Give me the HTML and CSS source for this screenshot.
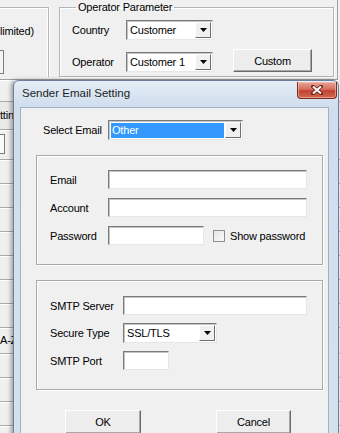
FILE: index.html
```html
<!DOCTYPE html>
<html>
<head>
    <title>Sender Email Setting</title>
    <link rel="stylesheet" href="styles.css">
</head>
<body>
<div class="app">
    <div class="top">
        <div class="group-limit">
            <div class="limit-text">limited)</div>
            <div class="edge-box"></div>
        </div>
        <fieldset class="group-operator">
            <legend>Operator Parameter</legend>
            <div class="op-body">
                <div class="op-rows">
                    <div class="op-row">
                        <span class="op-label">Country</span>
                        <div class="combo combo-op">
                            <span class="combo-text">Customer</span>
                            <span class="combo-btn"><svg width="7" height="4" viewBox="0 0 7 4"><path d="M0 0h7L3.5 4z" fill="#000"/></svg></span>
                        </div>
                    </div>
                    <div class="op-row">
                        <span class="op-label">Operator</span>
                        <div class="combo combo-op">
                            <span class="combo-text">Customer 1</span>
                            <span class="combo-btn"><svg width="7" height="4" viewBox="0 0 7 4"><path d="M0 0h7L3.5 4z" fill="#000"/></svg></span>
                        </div>
                    </div>
                </div>
                <div class="btn btn-custom">Custom</div>
            </div>
        </fieldset>
    </div>

    <div class="list">
        <div class="list-row row-head"></div>
        <div class="list-row row-tab">tting</div>
        <div class="list-row row-box"><div class="mini-box"></div></div>
        <div class="list-row"></div>
        <div class="list-row"></div>
        <div class="list-row"></div>
        <div class="list-row"></div>
        <div class="list-row"></div>
        <div class="list-row"></div>
        <div class="list-row"></div>
        <div class="list-row row-text">A-Z</div>
        <div class="list-row"></div>
        <div class="list-row"></div>
        <div class="list-row"></div>
    </div>

    <div class="dialog">
        <div class="titlebar">
            <span class="title">Sender Email Setting</span>
            <span class="close-btn">
                <svg width="12" height="10" viewBox="0 0 12 10">
                    <path d="M2 1.5l8 7M10 1.5l-8 7" stroke="#6a2119" stroke-width="3.6" stroke-linecap="square"/>
                    <path d="M2 1.5l8 7M10 1.5l-8 7" stroke="#fff" stroke-width="2"/>
                </svg>
            </span>
        </div>
        <div class="client">
            <div class="select-row">
                <span class="select-label">Select Email</span>
                <div class="combo combo-email">
                    <span class="combo-text selected">Other</span>
                    <span class="combo-btn"><svg width="7" height="4" viewBox="0 0 7 4"><path d="M0 0h7L3.5 4z" fill="#000"/></svg></span>
                </div>
            </div>

            <div class="box box-account">
                <div class="field">
                    <span class="field-label">Email</span>
                    <div class="input input-wide"></div>
                </div>
                <div class="field">
                    <span class="field-label">Account</span>
                    <div class="input input-wide"></div>
                </div>
                <div class="field">
                    <span class="field-label">Password</span>
                    <div class="input input-pass"></div>
                    <span class="check"></span>
                    <span class="check-label">Show password</span>
                </div>
            </div>

            <div class="box box-smtp">
                <div class="field">
                    <span class="field-label smtp-label">SMTP Server</span>
                    <div class="input input-server"></div>
                </div>
                <div class="field">
                    <span class="field-label smtp-label">Secure Type</span>
                    <div class="combo combo-secure">
                        <span class="combo-text">SSL/TLS</span>
                        <span class="combo-btn"><svg width="7" height="4" viewBox="0 0 7 4"><path d="M0 0h7L3.5 4z" fill="#000"/></svg></span>
                    </div>
                </div>
                <div class="field">
                    <span class="field-label smtp-label">SMTP Port</span>
                    <div class="input input-port"></div>
                </div>
            </div>

            <div class="buttons">
                <div class="btn btn-ok">OK</div>
                <div class="btn btn-cancel">Cancel</div>
            </div>
        </div>
    </div>
</div>
</body>
</html>
```

FILE: styles.css
```css
body {
    margin: 0;
    background: #f0f0f0;
    font-family: "Liberation Sans", Arial, sans-serif;
    font-size: 11px;
    letter-spacing: -0.2px;
    color: #000;
}

.app {
    position: relative;
    width: 340px;
    height: 433px;
    overflow: hidden;
}

/* background window */

.top {
    display: flex;
    box-sizing: border-box;
    width: 338px;
    height: 80px;
    padding-top: 1px;
    border-bottom: 1px solid #a0a0a0;
    border-right: 1px solid #a0a0a0;
    box-shadow: 0 1px 0 #fff;
}

.group-limit {
    box-sizing: border-box;
    width: 49px;
    height: 70px;
    margin-top: 6px;
    border-top: 1px solid #b4b4b4;
    border-right: 1px solid #b4b4b4;
    box-shadow: inset -1px 1px 0 #fff, 1px 0 0 #fff;
}

.limit-text {
    padding: 17px 0 0 0;
    line-height: 13px;
    white-space: nowrap;
}

.edge-box {
    width: 3px;
    height: 22px;
    margin-top: 12px;
    border: 1px solid #7c7c7c;
    border-left: none;
    background: #f4f4f4;
}

.group-operator {
    box-sizing: border-box;
    width: 275px;
    height: 76px;
    margin: 0 0 0 10px;
    padding: 0 0 0 12px;
    border: 1px solid #b4b4b4;
    box-shadow: inset 1px 1px 0 #fff, 1px 1px 0 #fff;
}

.group-operator legend {
    margin-left: 4px;
    padding: 0 2px;
    line-height: 13px;
}

.op-body {
    display: flex;
    padding-top: 6px;
}

.op-rows {
    display: flex;
    flex-direction: column;
    gap: 12px;
}

.op-row {
    display: flex;
    align-items: center;
}

.op-label {
    width: 54px;
}

.btn-custom {
    align-self: flex-end;
    width: 79px;
    height: 23px;
    margin-left: 20px;
}

.list {
    display: flex;
    flex-direction: column;
}

.list-row {
    box-sizing: border-box;
    height: 24px;
    border-bottom: 1px solid #a9a9a9;
    box-shadow: 0 1px 0 #fff;
    line-height: 22px;
    white-space: nowrap;
}

.row-head {
    height: 22px;
}

.row-tab {
    height: 28px;
    background: #e9e9e9;
    line-height: 26px;
}

.row-box {
    height: 30px;
    padding-top: 4px;
}

.mini-box {
    width: 4px;
    height: 18px;
    border: 1px solid #7c7c7c;
    border-left: none;
    background: #fafafa;
}

.row-text {
    height: 26px;
    line-height: 24px;
}

/* dialog window */

.dialog {
    position: absolute;
    left: 13px;
    top: 80px;
    display: flex;
    flex-direction: column;
    box-sizing: border-box;
    width: 326px;
    height: 370px;
    padding: 0 9px 0 6px;
    border: 1px solid #6d7f96;
    border-radius: 6px 6px 0 0;
    background: linear-gradient(180deg, #e4edf7 0, #cfdded 26px, #d6e1ee 100%);
    box-shadow: -2px 0 4px rgba(0, 0, 0, 0.35);
}

.titlebar {
    display: flex;
    align-items: flex-start;
    height: 26px;
    flex-shrink: 0;
}

.title {
    padding-left: 2px;
    line-height: 24px;
    font-size: 11.5px;
    letter-spacing: 0;
    color: #1e1e1e;
}

.close-btn {
    display: flex;
    align-items: center;
    justify-content: center;
    box-sizing: border-box;
    width: 40px;
    height: 17px;
    margin: 1px -8px 0 auto;
    border: 1px solid #7a2a20;
    border-top: none;
    border-radius: 0 0 4px 4px;
    background: linear-gradient(180deg, #e8a597 0, #d46f5f 45%, #c2422f 55%, #cf6a50 100%);
    box-shadow: inset 0 0 0 1px rgba(255, 210, 200, 0.5);
}

.client {
    flex: 1;
    border: 1px solid #9fb1c6;
    background: #f0f0f0;
}

.select-row {
    display: flex;
    align-items: center;
    margin-top: 12px;
    padding-left: 22px;
}

.select-label {
    width: 65px;
}

.box {
    box-sizing: border-box;
    width: 287px;
    height: 110px;
    margin: 15px 0 0 15px;
    border: 1px solid #a9a9a9;
    box-shadow: inset 1px 1px 0 #fff, 1px 1px 0 #fff;
    display: flex;
    flex-direction: column;
}

.box-account {
    padding: 14px 0 0 13px;
    gap: 9px;
}

.box-smtp {
    padding: 15px 0 0 13px;
    gap: 8px;
}

.field {
    display: flex;
    align-items: center;
}

.field-label {
    width: 58px;
}

.smtp-label {
    width: 73px;
}

/* controls */

.input {
    box-sizing: border-box;
    height: 19px;
    background: #fff;
    border: 1px solid;
    border-color: #7a7a7a #e6e6e6 #e6e6e6 #7a7a7a;
    box-shadow: inset 1px 1px 0 #c4c4c4;
}

.input-wide {
    width: 199px;
}

.input-pass {
    width: 96px;
}

.input-server {
    width: 184px;
}

.input-port {
    width: 46px;
}

.check {
    box-sizing: border-box;
    width: 12px;
    height: 12px;
    margin-left: 9px;
    border: 1px solid #8e8f8f;
    background: linear-gradient(135deg, #e4e4e4, #fbfbfb);
}

.check-label {
    margin-left: 5px;
}

.combo {
    display: flex;
    box-sizing: border-box;
    height: 20px;
    padding: 1px;
    background: #fff;
    border: 1px solid;
    border-color: #7a7a7a #e6e6e6 #e6e6e6 #7a7a7a;
    box-shadow: inset 1px 1px 0 #c4c4c4;
}

.combo-op {
    width: 87px;
}

.combo-email {
    width: 135px;
}

.combo-secure {
    width: 94px;
}

.combo-text {
    flex: 1;
    padding-left: 2px;
    line-height: 16px;
    white-space: nowrap;
    overflow: hidden;
}

.combo-text.selected {
    margin: 1px 1px 0 1px;
    padding-left: 1px;
    line-height: 15px;
    background: #3399ff;
    color: #fff;
}

.combo-btn {
    display: flex;
    align-items: center;
    justify-content: center;
    box-sizing: border-box;
    width: 16px;
    border: 1px solid;
    border-color: #fff #6e6e6e #6e6e6e #fff;
    background: #f0f0f0;
}

.btn {
    display: flex;
    align-items: center;
    justify-content: center;
    box-sizing: border-box;
    border: 1px solid;
    border-color: #fff #6b6b6b #6b6b6b #fff;
    background: #ededed;
    box-shadow: inset -1px -1px 0 #a8a8a8;
}

.buttons {
    display: flex;
    margin: 20px 0 0 44px;
}

.btn-ok {
    width: 76px;
    height: 24px;
}

.btn-cancel {
    width: 75px;
    height: 24px;
    margin-left: 75px;
}
```
